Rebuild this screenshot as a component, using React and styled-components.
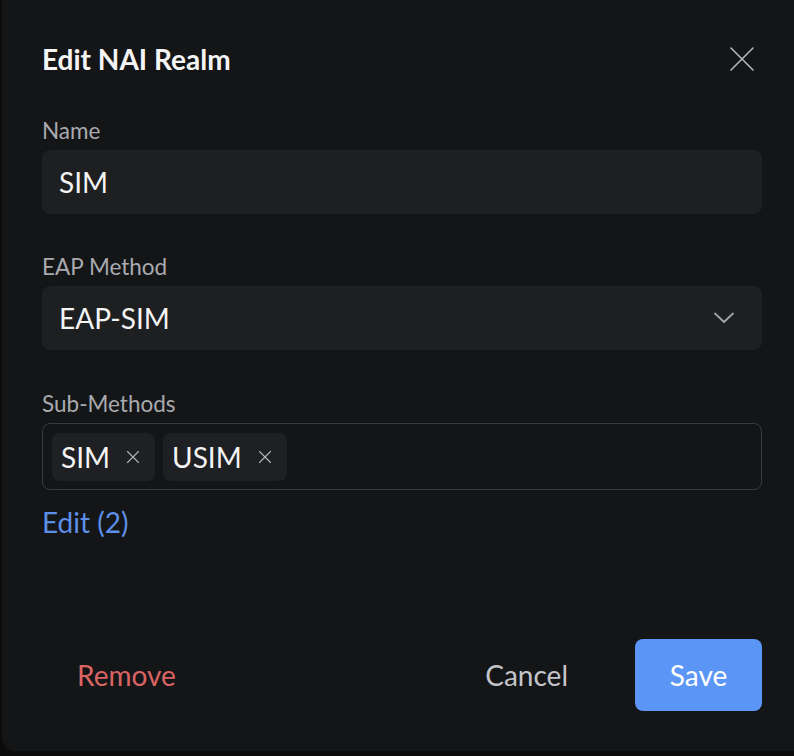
import React from "react";
import styled, { createGlobalStyle } from "styled-components";

const Global = createGlobalStyle`
  html, body { margin: 0; padding: 0; background: #0b0b0c; }
  body { font-family: Lato, "Noto Sans", sans-serif; }
  * { box-sizing: border-box; }
`;

const Page = styled.div`
  width: 794px;
  height: 756px;
  background: #0b0b0c;
  padding: 0 0 5px 2px;
  overflow: hidden;
`;

const Dialog = styled.div`
  height: calc(100% + 20px);
  width: 820px;
  margin-top: -20px;
  background: #141517;
  border-radius: 14px;
  padding: 64px 0 40px 40px;
  display: flex;
  flex-direction: column;
`;

const Inner = styled.div`
  width: 720px;
  display: flex;
  flex-direction: column;
  flex: 1;
`;

const Header = styled.div`
  display: flex;
  align-items: center;
  justify-content: space-between;
  height: 30px;
`;

const Title = styled.h2`
  margin: 0;
  font-size: 28px;
  font-weight: 700;
  color: #f4f4f5;
`;

const CloseBtn = styled.button`
  background: none;
  border: none;
  padding: 0;
  margin-right: 8px;
  width: 24px;
  height: 24px;
  display: flex;
  color: #b4b5ba;
`;

const Field = styled.div`
  display: flex;
  flex-direction: column;
  gap: 6px;
  margin-top: ${(p) => p.$mt}px;
`;

const Label = styled.label`
  font-size: 22.5px;
  color: #a9aaaf;
  line-height: 26px;
`;

const Input = styled.div`
  height: 64px;
  border-radius: 8px;
  background: #1e1f21;
  display: flex;
  align-items: center;
  justify-content: space-between;
  padding: 0 28px 0 17px;
  font-size: 28px;
  color: #f4f4f5;
`;

const TagBox = styled.div`
  height: 67px;
  border-radius: 8px;
  border: 1.5px solid #393a3f;
  display: flex;
  align-items: center;
  gap: 8px;
  padding: 0 9px;
`;

const Chip = styled.span`
  height: 48px;
  border-radius: 8px;
  background: #1f2023;
  display: inline-flex;
  align-items: center;
  gap: 17px;
  padding: 0 16px 0 9px;
  font-size: 28px;
  color: #f4f4f5;
`;

const ChipX = styled.span`
  display: inline-flex;
  color: #b4b5ba;
`;

const EditLink = styled.a`
  margin-top: 15px;
  font-size: 28px;
  color: #5b8fe8;
  text-decoration: none;
  align-self: flex-start;
`;

const Footer = styled.div`
  margin-top: auto;
  display: flex;
  align-items: center;
  padding-left: 35px;
`;

const TextBtn = styled.button`
  background: none;
  border: none;
  padding: 0;
  font-family: inherit;
  font-size: 28px;
  color: ${(p) => p.$color};
  margin-left: ${(p) => (p.$auto ? "auto" : "0")};
`;

const SaveBtn = styled.button`
  margin-left: 67px;
  width: 127px;
  height: 72px;
  border: none;
  border-radius: 8px;
  background: #5b96f7;
  color: #ffffff;
  font-family: inherit;
  font-size: 28px;
`;

const XIcon = ({ size = 24, sw = 2 }) => (
  <svg width={size} height={size} viewBox="0 0 24 24" fill="none" stroke="currentColor" strokeWidth={sw} strokeLinecap="round">
    <path d="M1 1L23 23M23 1L1 23" />
  </svg>
);

const Chevron = () => (
  <svg width="20" height="12" viewBox="0 0 20 12" fill="none" stroke="#a4a5aa" strokeWidth="1.8" strokeLinecap="round" strokeLinejoin="round">
    <path d="M1 1.5L10 10L19 1.5" />
  </svg>
);

export default function App() {
  return (
    <Page>
      <Global />
      <Dialog>
        <Inner>
          <Header>
            <Title>Edit NAI Realm</Title>
            <CloseBtn aria-label="Close">
              <XIcon size={24} sw={1.6} />
            </CloseBtn>
          </Header>
          <Field $mt={44}>
            <Label>Name</Label>
            <Input>SIM</Input>
          </Field>
          <Field $mt={40}>
            <Label>EAP Method</Label>
            <Input>
              EAP-SIM
              <Chevron />
            </Input>
          </Field>
          <Field $mt={41}>
            <Label>Sub-Methods</Label>
            <TagBox>
              <Chip>
                SIM
                <ChipX>
                  <XIcon size={12} sw={2.2} />
                </ChipX>
              </Chip>
              <Chip>
                USIM
                <ChipX>
                  <XIcon size={12} sw={2.2} />
                </ChipX>
              </Chip>
            </TagBox>
          </Field>
          <EditLink href="#">Edit (2)</EditLink>
          <Footer>
            <TextBtn $color="#d96464">Remove</TextBtn>
            <TextBtn $color="#c4c5ca" $auto>Cancel</TextBtn>
            <SaveBtn>Save</SaveBtn>
          </Footer>
        </Inner>
      </Dialog>
    </Page>
  );
}
